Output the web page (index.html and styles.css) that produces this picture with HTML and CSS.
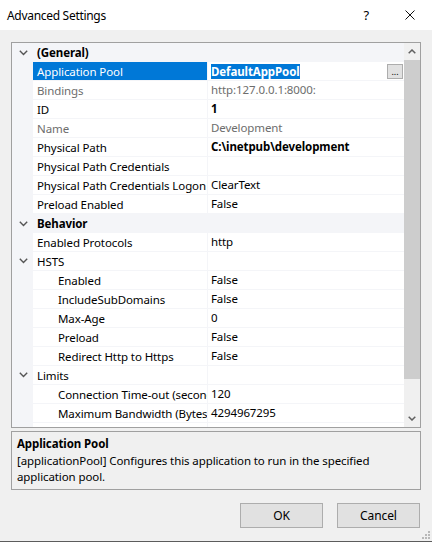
FILE: index.html
```html
<!DOCTYPE html>
<html>
<head>
    <meta charset="utf-8"/>
    <title>Advanced Settings</title>
    <link rel="stylesheet" href="styles.css">
</head>
<body>
<div class="dialog">
    <div class="titlebar">
        <span class="title">Advanced Settings</span>
        <span class="help">?</span>
        <svg class="close" width="10" height="10" viewBox="0 0 10 10">
            <path d="M0.5 0.5 L9.5 9.5 M9.5 0.5 L0.5 9.5" stroke="#111" stroke-width="1" fill="none"/>
        </svg>
    </div>

    <div class="content">
        <div class="grid">
            <div class="list">
                <div class="row category">
                    <div class="gutter"><svg width="9" height="6" viewBox="0 0 9 6"><path d="M0.8 0.8 L4.5 4.5 L8.2 0.8" stroke="#555" stroke-width="1.4" fill="none"/></svg></div>
                    <div class="cat-name">(General)</div>
                </div>
                <div class="row selected">
                    <div class="gutter"></div>
                    <div class="name">Application Pool</div>
                    <div class="value"><span class="edit">DefaultAppPool</span><span class="dots">...</span></div>
                </div>
                <div class="row disabled">
                    <div class="gutter"></div>
                    <div class="name">Bindings</div>
                    <div class="value">http:127.0.0.1:8000:</div>
                </div>
                <div class="row">
                    <div class="gutter"></div>
                    <div class="name">ID</div>
                    <div class="value bold">1</div>
                </div>
                <div class="row disabled">
                    <div class="gutter"></div>
                    <div class="name">Name</div>
                    <div class="value">Development</div>
                </div>
                <div class="row">
                    <div class="gutter"></div>
                    <div class="name">Physical Path</div>
                    <div class="value bold">C:\inetpub\development</div>
                </div>
                <div class="row">
                    <div class="gutter"></div>
                    <div class="name">Physical Path Credentials</div>
                    <div class="value"></div>
                </div>
                <div class="row">
                    <div class="gutter"></div>
                    <div class="name">Physical Path Credentials Logon</div>
                    <div class="value">ClearText</div>
                </div>
                <div class="row">
                    <div class="gutter"></div>
                    <div class="name">Preload Enabled</div>
                    <div class="value">False</div>
                </div>
                <div class="row category">
                    <div class="gutter"><svg width="9" height="6" viewBox="0 0 9 6"><path d="M0.8 0.8 L4.5 4.5 L8.2 0.8" stroke="#555" stroke-width="1.4" fill="none"/></svg></div>
                    <div class="cat-name">Behavior</div>
                </div>
                <div class="row">
                    <div class="gutter"></div>
                    <div class="name">Enabled Protocols</div>
                    <div class="value">http</div>
                </div>
                <div class="row">
                    <div class="gutter"><svg width="9" height="6" viewBox="0 0 9 6"><path d="M0.8 0.8 L4.5 4.5 L8.2 0.8" stroke="#555" stroke-width="1.4" fill="none"/></svg></div>
                    <div class="name">HSTS</div>
                    <div class="value"></div>
                </div>
                <div class="row">
                    <div class="gutter"></div>
                    <div class="name sub">Enabled</div>
                    <div class="value">False</div>
                </div>
                <div class="row">
                    <div class="gutter"></div>
                    <div class="name sub">IncludeSubDomains</div>
                    <div class="value">False</div>
                </div>
                <div class="row">
                    <div class="gutter"></div>
                    <div class="name sub">Max-Age</div>
                    <div class="value">0</div>
                </div>
                <div class="row">
                    <div class="gutter"></div>
                    <div class="name sub">Preload</div>
                    <div class="value">False</div>
                </div>
                <div class="row">
                    <div class="gutter"></div>
                    <div class="name sub">Redirect Http to Https</div>
                    <div class="value">False</div>
                </div>
                <div class="row">
                    <div class="gutter"><svg width="9" height="6" viewBox="0 0 9 6"><path d="M0.8 0.8 L4.5 4.5 L8.2 0.8" stroke="#555" stroke-width="1.4" fill="none"/></svg></div>
                    <div class="name">Limits</div>
                    <div class="value"></div>
                </div>
                <div class="row">
                    <div class="gutter"></div>
                    <div class="name sub">Connection Time-out (seconds)</div>
                    <div class="value">120</div>
                </div>
                <div class="row">
                    <div class="gutter"></div>
                    <div class="name sub">Maximum Bandwidth (Bytes/second)</div>
                    <div class="value">4294967295</div>
                </div>
                <div class="row">
                    <div class="gutter"></div>
                    <div class="name sub"></div>
                    <div class="value"></div>
                </div>
            </div>
            <div class="scrollbar">
                <div class="arrow"><svg width="8" height="5" viewBox="0 0 8 5"><path d="M0.7 4.3 L4 1 L7.3 4.3" stroke="#606060" stroke-width="1.5" fill="none"/></svg></div>
                <div class="thumb"></div>
                <div class="track"></div>
                <div class="arrow"><svg width="8" height="5" viewBox="0 0 8 5"><path d="M0.7 0.7 L4 4 L7.3 0.7" stroke="#606060" stroke-width="1.5" fill="none"/></svg></div>
            </div>
        </div>

        <div class="description">
            <div class="desc-title">Application Pool</div>
            <div class="desc-text">[applicationPool] Configures this application to run in the specified application pool.</div>
        </div>

        <div class="buttons">
            <div class="button">OK</div>
            <div class="button">Cancel</div>
        </div>
    </div>

    <svg class="grip" width="8" height="8" viewBox="0 0 8 8">
        <rect x="6" y="0" width="2" height="2" fill="#b8b8b8"/>
        <rect x="3" y="3" width="2" height="2" fill="#b8b8b8"/>
        <rect x="6" y="3" width="2" height="2" fill="#b8b8b8"/>
        <rect x="0" y="6" width="2" height="2" fill="#b8b8b8"/>
        <rect x="3" y="6" width="2" height="2" fill="#b8b8b8"/>
        <rect x="6" y="6" width="2" height="2" fill="#b8b8b8"/>
    </svg>
</div>
</body>
</html>
```

FILE: styles.css
```css
body {
    margin: 0;
    font-family: "Noto Sans", sans-serif;
    font-size: 11.5px;
    letter-spacing: -0.1px;
    color: #000;
    background: #f0f0f0;
}

.dialog {
    position: relative;
    width: 432px;
    height: 542px;
    box-sizing: border-box;
    border-bottom: 1px solid #5c5c5c;
    overflow: hidden;
    display: flex;
    flex-direction: column;
}

.titlebar {
    height: 30px;
    background: #fff;
    display: flex;
    align-items: center;
    padding-left: 7px;
}

.title {
    flex: 1;
    font-size: 12px;
    letter-spacing: -0.3px;
}

.help {
    font-size: 13px;
    margin-right: 36px;
}

.close {
    margin-right: 17px;
}

.content {
    padding: 12px 11px 0 11px;
    display: flex;
    flex-direction: column;
}

.grid {
    height: 386px;
    box-sizing: border-box;
    border: 1px solid #a0a0a0;
    display: flex;
}

.list {
    flex: 1;
    overflow: hidden;
    background: #fff;
}

.row {
    display: grid;
    grid-template-columns: 21px 175px 1fr;
    height: 18px;
    line-height: 20px;
    border-bottom: 1px solid #f4f5f8;
    white-space: nowrap;
    overflow: hidden;
}

.gutter {
    background: #f4f5f8;
    display: flex;
    align-items: center;
    justify-content: center;
    padding-left: 1px;
}

.name {
    padding-left: 4px;
    border-right: 1px solid #f4f5f8;
    overflow: hidden;
}

.name.sub {
    padding-left: 25px;
}

.value {
    padding-left: 3px;
    padding-right: 1px;
    overflow: hidden;
    display: flex;
    align-items: center;
}

.value.bold {
    font-weight: bold;
}

.category {
    background: #f4f5f8;
}

.cat-name {
    grid-column: 2 / 4;
    padding-left: 4px;
    font-weight: bold;
}

.disabled {
    color: #6d6d6d;
}

.selected .name {
    background: #0078d7;
    color: #fff;
}

.edit {
    background: #0078d7;
    color: #fff;
    font-weight: bold;
    line-height: 15px;
    margin-top: 1px;
}

.dots {
    margin-left: auto;
    width: 14px;
    height: 13px;
    border: 1px solid #adadad;
    background: #e1e1e1;
    font-size: 9px;
    line-height: 14px;
    text-align: center;
}

.scrollbar {
    width: 16px;
    background: #f0f0f0;
    display: flex;
    flex-direction: column;
}

.arrow {
    height: 17px;
    display: flex;
    align-items: center;
    justify-content: center;
}

.thumb {
    height: 319px;
    background: #cdcdcd;
}

.track {
    flex: 1;
}

.description {
    margin-top: 3px;
    height: 59px;
    box-sizing: border-box;
    border: 1px solid #a0a0a0;
    padding: 3px 5px 2px 5px;
}

.desc-title {
    font-weight: bold;
    line-height: 18px;
}

.desc-text {
    line-height: 16px;
}

.buttons {
    margin-top: 13px;
    display: flex;
    justify-content: flex-end;
    gap: 14px;
    padding-right: 1px;
}

.button {
    width: 81px;
    height: 23px;
    line-height: 24px;
    border: 1px solid #adadad;
    background: #e1e1e1;
    text-align: center;
    font-size: 12px;
}

.grip {
    position: absolute;
    right: 2px;
    bottom: 2px;
}
```
